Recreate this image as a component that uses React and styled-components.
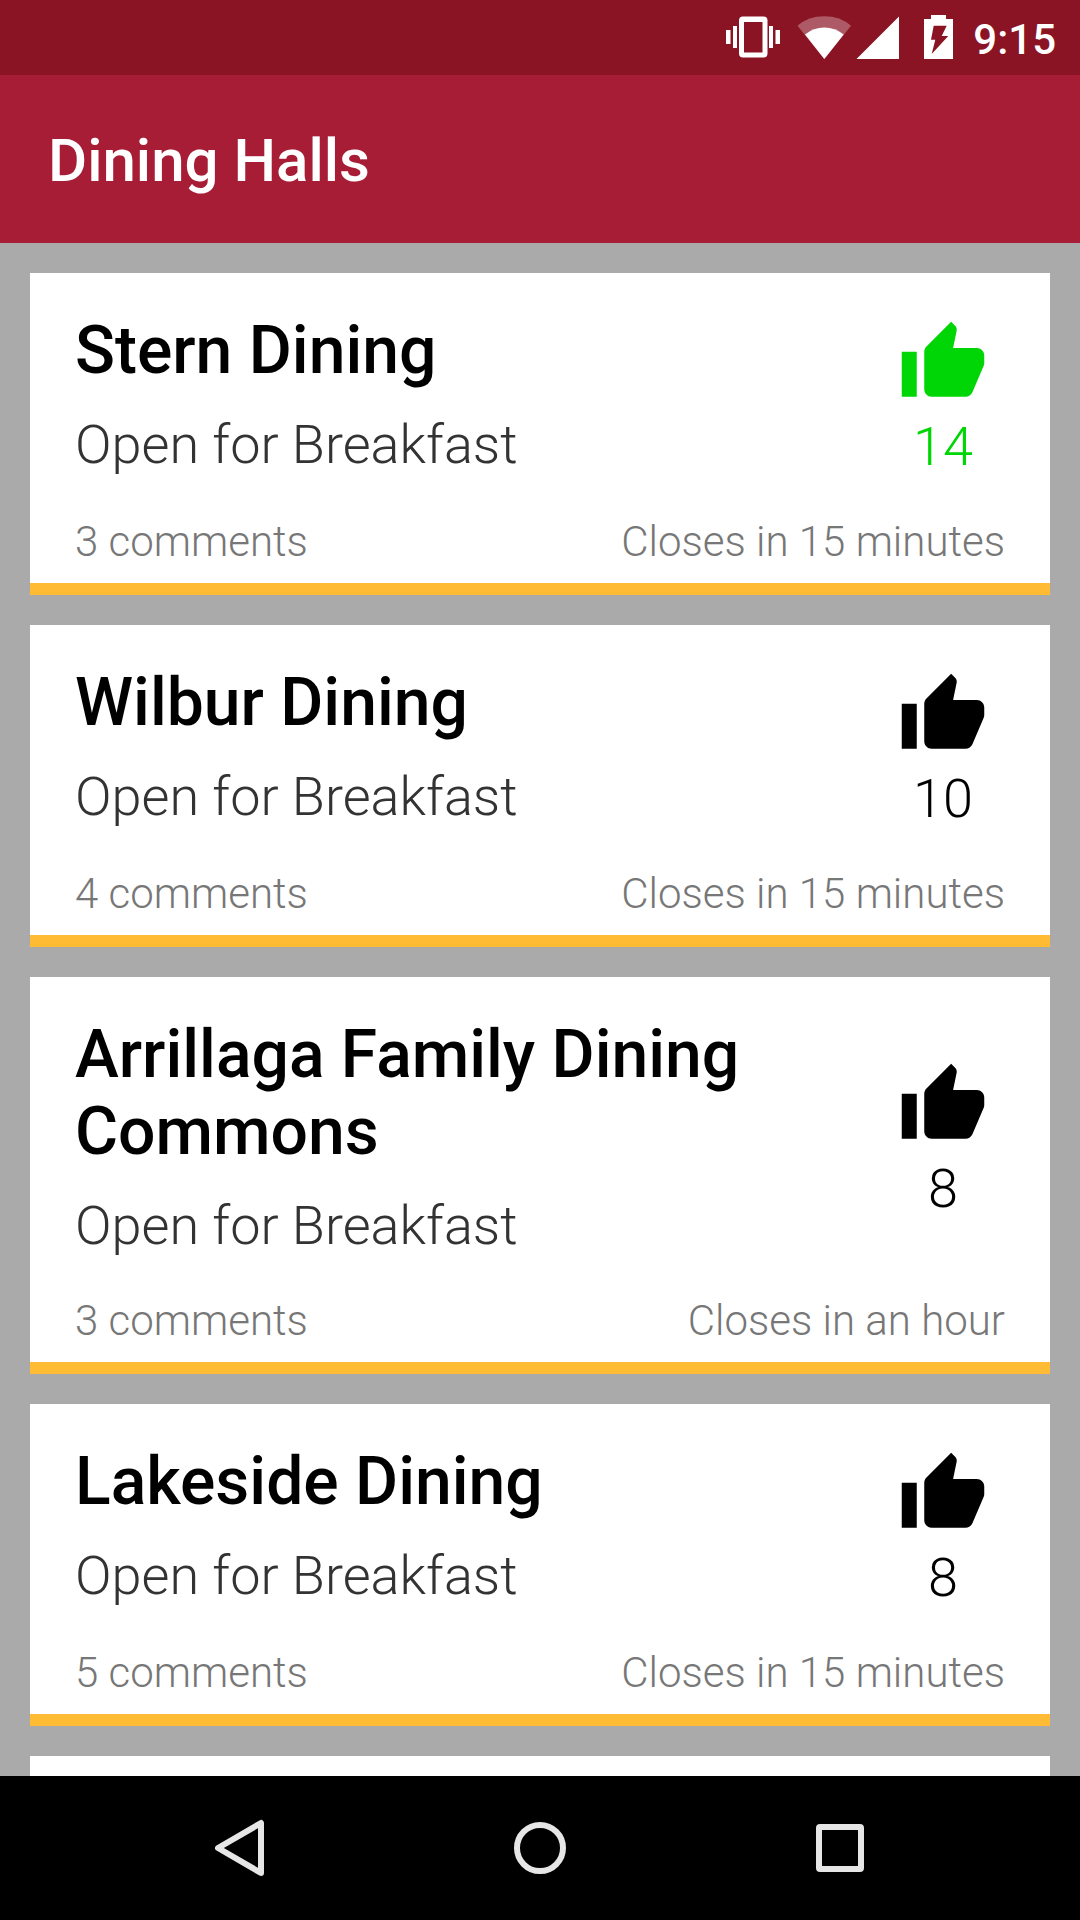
import React, { useState } from "react";
import styled, { createGlobalStyle } from "styled-components";

const GlobalStyle = createGlobalStyle`
  * { box-sizing: border-box; }
  body { margin: 0; background: #aaaaaa; }
`;

const Screen = styled.div`
  display: flex;
  flex-direction: column;
  height: 100vh;
  overflow: hidden;
  font-family: Roboto, "Noto Sans", sans-serif;
`;

const StatusBar = styled.div`
  display: flex;
  justify-content: flex-end;
  flex: none;
  height: 75px;
  padding-right: 24px;
  background: #8a1424;
  color: #fff;
`;

const StatusIcon = styled.svg`
  flex: none;
  height: 75px;
  fill: #fff;
`;

const Clock = styled.time`
  padding-top: 15px;
  font-size: 42px;
  font-weight: 500;
  line-height: 49px;
`;

const AppBar = styled.header`
  flex: none;
  padding: 51px 48px 47px;
  background: #a71d36;
`;

const AppTitle = styled.h1`
  margin: 0;
  color: #fff;
  font-size: 60px;
  font-weight: 500;
  line-height: 70px;
`;

const HallList = styled.main`
  display: flex;
  flex: 1;
  flex-direction: column;
  gap: 30px;
  min-height: 0;
  padding: 30px 30px 0;
  overflow: hidden;
  background: #aaaaaa;
`;

const Card = styled.article`
  display: flex;
  flex: none;
  flex-direction: column;
  gap: 39px;
  min-height: 322px;
  padding: 39px 45px 17px;
  border-bottom: 12px solid #ffbb33;
  background: #fff;
`;

const CardBody = styled.div`
  display: flex;
  align-items: flex-start;
`;

const HallInfo = styled.div`
  display: flex;
  flex: 1;
  flex-direction: column;
  gap: 24px;
`;

const HallName = styled.h2`
  margin: 0;
  color: #000;
  font-size: 66px;
  font-weight: 500;
  line-height: 77px;
`;

const HallStatus = styled.p`
  margin: 0;
  color: #333;
  font-size: 54px;
  font-weight: 300;
  line-height: 63px;
`;

const VoteButton = styled.button`
  display: flex;
  flex: none;
  flex-direction: column;
  align-items: center;
  align-self: center;
  gap: 7px;
  width: 124px;
  padding: 6px 0 0;
  border: 0;
  background: none;
  color: ${(p) => (p.$voted ? "#00d605" : "#000")};
  font-family: inherit;
  font-size: 54px;
  font-weight: 300;
  line-height: 63px;
  cursor: pointer;
`;

const ThumbIcon = styled.svg`
  width: 90px;
  height: 90px;
  fill: currentColor;
`;

const CardFooter = styled.footer`
  display: flex;
  justify-content: space-between;
  color: #777;
  font-size: 42px;
  font-weight: 300;
  line-height: 49px;
`;

const NavBar = styled.nav`
  display: flex;
  flex: none;
  height: 144px;
  padding: 0 90px;
  background: #000;
`;

const NavButton = styled.button`
  display: flex;
  flex: 1;
  align-items: center;
  justify-content: center;
  padding: 0;
  border: 0;
  background: none;
  cursor: pointer;
`;

const NavIcon = styled.svg`
  width: 72px;
  height: 72px;
  fill: none;
  stroke: #e6e6e6;
  stroke-width: 6;
  stroke-linejoin: round;
`;

const halls = [
  { name: "Stern Dining", votes: 14, voted: true, comments: 3, closes: "Closes in 15 minutes" },
  { name: "Wilbur Dining", votes: 10, voted: false, comments: 4, closes: "Closes in 15 minutes" },
  { name: "Arrillaga Family Dining Commons", votes: 8, voted: false, comments: 3, closes: "Closes in an hour" },
  { name: "Lakeside Dining", votes: 8, voted: false, comments: 5, closes: "Closes in 15 minutes" },
];

function HallCard({ hall }) {
  const [voted, setVoted] = useState(hall.voted);
  const votes = hall.votes + Number(voted) - Number(hall.voted);
  return (
    <Card>
      <CardBody>
        <HallInfo>
          <HallName>{hall.name}</HallName>
          <HallStatus>Open for Breakfast</HallStatus>
        </HallInfo>
        <VoteButton type="button" $voted={voted} aria-pressed={voted} onClick={() => setVoted(!voted)}>
          <ThumbIcon viewBox="0 0 24 24" aria-hidden="true">
            <path d="M1 21h4V9H1v12zm22-11c0-1.1-.9-2-2-2h-6.31l.95-4.57.03-.32c0-.41-.17-.79-.44-1.06L14.17 1 7.59 7.59C7.22 7.95 7 8.45 7 9v10c0 1.1.9 2 2 2h9c.83 0 1.54-.5 1.84-1.22l3.02-7.05c.09-.23.14-.47.14-.73v-2z" />
          </ThumbIcon>
          <span>{votes}</span>
        </VoteButton>
      </CardBody>
      <CardFooter>
        <span>{hall.comments} comments</span>
        <span>{hall.closes}</span>
      </CardFooter>
    </Card>
  );
}

export default function App() {
  return (
    <Screen>
      <GlobalStyle />
      <StatusBar>
        <StatusIcon width="68" viewBox="0 0 68 75" aria-hidden="true">
          <path d="M5 30h4.5v14H5zM12 26h4v22h-4zM48 26h4v22h-4zM54.5 30H59v14h-4.500z" />
          <path fillRule="evenodd" d="M22 16.500h20.500a4 4 0 0 1 4 4v33a4 4 0 0 1-4 4H22a4 4 0 0 1-4-4v-33a4 4 0 0 1 4-4zM23 22v30.500h18.500V22z" />
        </StatusIcon>
        <StatusIcon width="64" viewBox="0 0 64 75" aria-hidden="true">
          <path opacity="0.3" d="M8.500 25.700Q19.500 16.300 35.300 16.300T62 25.700L35.300 59z" />
          <path d="M16 34.500Q24.500 27.600 35.300 27.600T54.700 34.500L35.300 59z" />
        </StatusIcon>
        <StatusIcon width="60" viewBox="0 0 60 75" aria-hidden="true">
          <path d="M3.500 59L46 16.500V59z" />
        </StatusIcon>
        <StatusIcon width="60" viewBox="0 0 60 75" aria-hidden="true">
          <path fillRule="evenodd" d="M11 19h7v-4h15v4h7v40H11zM20.700 25.700L18 39.700h4.300L18.700 54 35.300 36h-6.600l5-10.300z" />
        </StatusIcon>
        <Clock>9:15</Clock>
      </StatusBar>
      <AppBar>
        <AppTitle>Dining Halls</AppTitle>
      </AppBar>
      <HallList>
        {halls.map((hall) => (
          <HallCard key={hall.name} hall={hall} />
        ))}
        <Card />
      </HallList>
      <NavBar>
        <NavButton type="button" aria-label="Back">
          <NavIcon viewBox="0 0 72 72">
            <path d="M57 11v50L14 36z" />
          </NavIcon>
        </NavButton>
        <NavButton type="button" aria-label="Home">
          <NavIcon viewBox="0 0 72 72">
            <circle cx="36" cy="36" r="23" />
          </NavIcon>
        </NavButton>
        <NavButton type="button" aria-label="Recent apps">
          <NavIcon viewBox="0 0 72 72">
            <rect x="15" y="15" width="42" height="42" rx="1" />
          </NavIcon>
        </NavButton>
      </NavBar>
    </Screen>
  );
}
